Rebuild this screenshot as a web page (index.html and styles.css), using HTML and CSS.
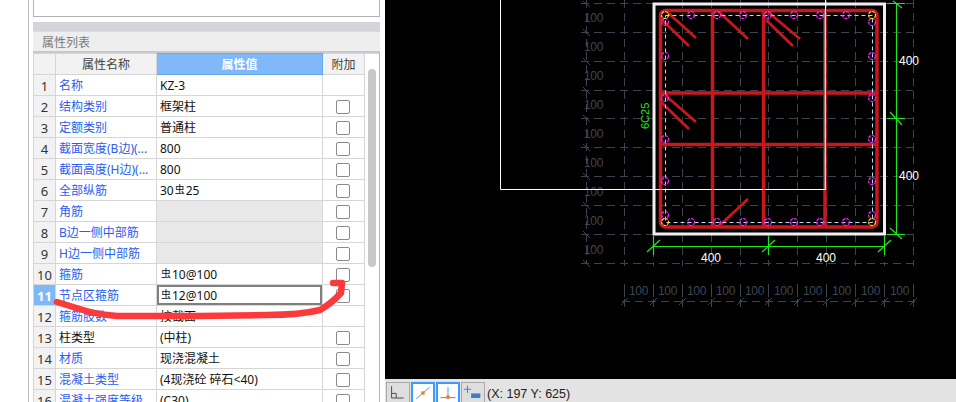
FILE: index.html
```html
<!DOCTYPE html>
<html lang="zh-CN">
<head>
  <meta charset="UTF-8" />
  <title>属性列表</title>
  <link rel="stylesheet" href="styles.css">
</head>
<body>

  <div class="side">
    <div class="side-inner">
      <div class="top-box"></div>
      <div class="strip"></div>
      <div class="list-title">属性列表</div>
      <div class="table-wrap">
        <table class="props">
          <colgroup>
            <col class="c-num"><col class="c-name"><col class="c-value"><col class="c-add">
          </colgroup>
          <tr class="head">
            <th></th><th>属性名称</th><th class="on">属性值</th><th>附加</th>
          </tr>
          <tr><td class="num">1</td><td class="name">名称</td><td>KZ-3</td><td class="add"></td></tr>
          <tr><td class="num">2</td><td class="name">结构类别</td><td>框架柱</td><td class="add"><span class="check"></span></td></tr>
          <tr><td class="num">3</td><td class="name">定额类别</td><td>普通柱</td><td class="add"><span class="check"></span></td></tr>
          <tr><td class="num">4</td><td class="name">截面宽度(B边)(...</td><td>800</td><td class="add"><span class="check"></span></td></tr>
          <tr><td class="num">5</td><td class="name">截面高度(H边)(...</td><td>800</td><td class="add"><span class="check"></span></td></tr>
          <tr><td class="num">6</td><td class="name">全部纵筋</td><td>30<span class="steel">虫</span>25</td><td class="add"><span class="check"></span></td></tr>
          <tr><td class="num">7</td><td class="name">角筋</td><td class="empty"></td><td class="add"><span class="check"></span></td></tr>
          <tr><td class="num">8</td><td class="name">B边一侧中部筋</td><td class="empty"></td><td class="add"><span class="check"></span></td></tr>
          <tr><td class="num">9</td><td class="name">H边一侧中部筋</td><td class="empty"></td><td class="add"><span class="check"></span></td></tr>
          <tr><td class="num">10</td><td class="name">箍筋</td><td><span class="steel">虫</span>10@100</td><td class="add"><span class="check"></span></td></tr>
          <tr><td class="num sel">11</td><td class="name">节点区箍筋</td><td class="editing"><span class="steel">虫</span>12@100</td><td class="add"><span class="check"></span></td></tr>
          <tr><td class="num">12</td><td class="name">箍筋肢数</td><td>按截面</td><td class="add"></td></tr>
          <tr><td class="num">13</td><td>柱类型</td><td>(中柱)</td><td class="add"><span class="check"></span></td></tr>
          <tr><td class="num">14</td><td class="name">材质</td><td>现浇混凝土</td><td class="add"><span class="check"></span></td></tr>
          <tr><td class="num">15</td><td class="name">混凝土类型</td><td>(4现浇砼 碎石&lt;40)</td><td class="add"><span class="check"></span></td></tr>
          <tr><td class="num">16</td><td class="name">混凝土强度等级</td><td>(C30)</td><td class="add"><span class="check"></span></td></tr>
        </table>
        <div class="scroll"><div class="thumb"></div></div>
      </div>
    </div>
    <!-- red marker stroke drawn over the table -->
    <svg class="marker" viewBox="0 0 385 402">
      <path d="M333 283 L342 283 L341 293 Q332 303 320 310 Q300 315 267 315 L200 316 L117 316 Q95 314 83 310 L57 302" />
    </svg>
  </div>

  <div class="work">
    <svg class="cad" viewBox="385 0 571 379">
      <!-- grid -->
      <path class="grid" d="M581 3.5H913M581 32.5H913M581 61.5H913M581 90.5H913M581 118.5H913M581 147.5H913M581 176.5H913M581 205.5H913M581 234.5H913M581 263.5H913M622 301.5H915" />
      <path class="grid" d="M586.5 0V263M624.5 0V266M653.5 236V266M682.5 0V266M711.5 0V266M740.5 0V266M768.5 0V266M797.5 0V266M826.5 0V266M855.5 0V266M884.5 236V266M913.5 0V266" />
      <path class="tick" d="M624.5 284V297M653.5 284V297M682.5 284V297M711.5 284V297M740.5 284V297M768.5 284V297M797.5 284V297M826.5 284V297M855.5 284V297M884.5 284V297M913.5 284V297" />
      <path class="tick" d="M624.5 299V307M653.5 299V307M682.5 299V307M711.5 299V307M740.5 299V307M768.5 299V307M797.5 299V307M826.5 299V307M855.5 299V307M884.5 299V307M913.5 299V307" />
      <path class="tick" d="M621 305L628 298M650 305L657 298M679 305L686 298M708 305L715 298M737 305L744 298M765 305L772 298M794 305L801 298M823 305L830 298M852 305L859 298M881 305L888 298M910 305L917 298" />
      <path class="tick" d="M583 1L590 7M583 29L590 36M583 58L590 65M583 87L590 94M583 115L590 122M583 144L590 151M583 173L590 180M583 202L590 209M583 231L590 238M583 260L590 267" />
      <g class="grid-text">
        <text x="584" y="22">100</text><text x="584" y="51">100</text><text x="584" y="80">100</text>
        <text x="584" y="109">100</text><text x="584" y="138">100</text><text x="584" y="167">100</text>
        <text x="584" y="196">100</text><text x="584" y="225">100</text><text x="584" y="254">100</text>
        <text x="629" y="295">100</text><text x="658" y="295">100</text><text x="687" y="295">100</text>
        <text x="716" y="295">100</text><text x="745" y="295">100</text><text x="774" y="295">100</text>
        <text x="803" y="295">100</text><text x="832" y="295">100</text><text x="861" y="295">100</text>
        <text x="890" y="295">100</text>
      </g>

      <!-- column outline -->
      <rect class="outline" x="654" y="4" width="230.5" height="230" />

      <!-- rebar -->
      <rect class="bar" x="660.5" y="10.5" width="216.5" height="216.5" rx="5" />
      <path class="bar" d="M712.5 10V227M763.5 10V227M825 10V227M660 93H877M660 144.5H877" />
      <path class="bar-thin" d="M665 10L696 38M662 20L689 46M717 10L748 39M768 12L800 39M766 20L793 46M665 95L696 122M661 102L689 129M718 227L748 199" />

      <rect class="inner" x="665.5" y="15.5" width="207" height="207" />

      <g class="pin">
        <circle cx="691" cy="15" r="3.5"/><circle cx="717" cy="15" r="3.5"/><circle cx="743" cy="15" r="3.5"/>
        <circle cx="768" cy="15" r="3.5"/><circle cx="794" cy="15" r="3.5"/><circle cx="820" cy="15" r="3.5"/>
        <circle cx="846" cy="15" r="3.5"/>
        <circle cx="691" cy="222" r="3.5"/><circle cx="717" cy="222" r="3.5"/><circle cx="743" cy="222" r="3.5"/>
        <circle cx="768" cy="222" r="3.5"/><circle cx="794" cy="222" r="3.5"/><circle cx="820" cy="222" r="3.5"/>
        <circle cx="846" cy="222" r="3.5"/>
        <circle cx="665" cy="22" r="3.5"/><circle cx="665" cy="56" r="3.5"/><circle cx="665" cy="98" r="3.5"/>
        <circle cx="665" cy="139" r="3.5"/><circle cx="665" cy="181" r="3.5"/><circle cx="665" cy="215" r="3.5"/>
        <circle cx="872" cy="22" r="3.5"/><circle cx="872" cy="56" r="3.5"/><circle cx="872" cy="98" r="3.5"/>
        <circle cx="872" cy="139" r="3.5"/><circle cx="872" cy="181" r="3.5"/><circle cx="872" cy="215" r="3.5"/>
      </g>
      <g class="pin corner">
        <circle cx="665" cy="15" r="3.5"/><circle cx="872" cy="15" r="3.5"/>
        <circle cx="665" cy="222" r="3.5"/><circle cx="872" cy="222" r="3.5"/>
      </g>

      <!-- selection frame -->
      <path class="frame" d="M500.5 0V189.5H825.5V0" />
      <path class="frame-over" d="M825 10V189M660 189.5H662M712 189.5H714M763 189.5H765" />

      <!-- dimensions -->
      <path class="dim" d="M896.5 3V234M887 3.5H905M887 118.5H905M887 234.5H905M653.5 246.5H884.5M653.5 236V255M768.5 236V255M884.5 236V255" />
      <path class="dim" d="M893 1L902 8M890 112L902 125M890 228L902 239M647 252L660 240M762 252L775 240M878 252L891 240" />
      <text class="dim-text" x="701" y="262">400</text>
      <text class="dim-text" x="816" y="262">400</text>
      <text class="dim-text" x="899" y="65">400</text>
      <text class="dim-text" x="899" y="180">400</text>
      <text class="note" transform="translate(649 129) rotate(-90)">6C25</text>
    </svg>

    <div class="status">
      <div class="tool">
        <svg viewBox="0 0 24 20"><path class="ic-dark" d="M5 3V16H18M5 11H10V16" /></svg>
      </div>
      <div class="tool active">
        <svg viewBox="0 0 24 20"><path class="ic-blue" d="M4 17L20 3" /><rect class="ic-orange" x="10" y="8" width="4" height="4" /></svg>
      </div>
      <div class="tool active">
        <svg viewBox="0 0 24 20"><path class="ic-blue" d="M12 3V15M3 15.5H21" /><rect class="ic-orange" x="10" y="13" width="4" height="4" /></svg>
      </div>
      <div class="tool">
        <svg viewBox="0 0 24 20"><path class="ic-blue" d="M2 6.5H10M6 2.5V10.5" /><rect class="ic-fill" x="10" y="11" width="10" height="5" /></svg>
      </div>
      <span class="coords">(X: 197 Y: 625)</span>
    </div>
  </div>

</body>
</html>
```

FILE: styles.css
```css
html, body {
  margin: 0;
  height: 100%;
}

body {
  display: flex;
  width: 956px;
  height: 402px;
  overflow: hidden;
  background: white;
  font-family: "Noto Sans", "Noto Sans CJK SC", sans-serif;
  font-size: 12px;
  color: #111;
}

.side {
  position: relative;
  flex: 0 0 385px;
  height: 402px;
  padding-left: 28px;
  box-sizing: border-box;
}

.side-inner {
  height: 402px;
  width: 347px;
  border-left: 1px solid #bdbdbd;
  padding-left: 4px;
}

.top-box {
  height: 16px;
  background: white;
  border: 1px solid #b4b4b4;
  border-top: none;
}

.strip {
  margin-top: 5px;
  height: 9px;
  background: #d3d5d9;
}

.list-title {
  height: 22px;
  line-height: 21px;
  background: #eeeeee;
  border-bottom: 2px solid #c9c9c9;
  border-top: 1px solid #dcdcdc;
  box-sizing: border-box;
  padding-left: 9px;
  font-size: 12px;
  color: #7b7b7b;
}

.table-wrap {
  display: flex;
  height: 349px;
  overflow: hidden;
  border-right: 1px solid #b4b4b4;
}

.props {
  border-collapse: collapse;
  table-layout: fixed;
  width: 331px;
  flex: none;
  align-self: flex-start;
}

.c-num { width: 22px; }
.c-name { width: 101px; }
.c-value { width: 166px; }
.c-add { width: 42px; }

.props tr {
  height: 21px;
}

.props th, .props td {
  border: 1px solid #d6d6d6;
  padding: 1px 3px 0;
  box-sizing: border-box;
  height: 21px;
  line-height: 18px;
  white-space: nowrap;
  overflow: hidden;
  font-weight: normal;
}

.props th {
  background: #f2f2f2;
  text-align: center;
  color: #444;
}

.props th.on {
  background: #7fb9fa;
  border-color: #62a8f2;
  color: white;
  font-weight: bold;
}

.props td.num {
  background: #f2f2f2;
  text-align: center;
  font-size: 13px;
  color: #333;
}

.props td.num.sel {
  background: #7db8f7;
  color: white;
  font-weight: bold;
}

.name {
  color: #2a5cf0;
}

.empty {
  background: #e9e9e9;
}

.props td.editing {
  box-shadow: inset 0 0 0 2px #808080;
}

.props td.add {
  padding: 0 4px 0 2px;
  text-align: center;
}

.check {
  display: inline-block;
  width: 12px;
  height: 12px;
  border: 1px solid #8a8a8a;
  border-radius: 2px;
  vertical-align: middle;
  background: white;
}

.steel {
  font-size: 10px;
  position: relative;
  top: -2px;
  margin: 0 1px;
}

.scroll {
  flex: 1;
  padding-top: 15px;
  background: white;
  border-top: 1px solid #d6d6d6;
  display: flex;
  justify-content: center;
}

.thumb {
  width: 8px;
  height: 198px;
  border-radius: 4px;
  background: #c8c8c8;
}

.marker {
  position: absolute;
  left: 0;
  top: 0;
  width: 385px;
  height: 402px;
  pointer-events: none;
}

.marker path {
  fill: none;
  stroke: #fb3a3c;
  stroke-width: 6.5;
  stroke-linecap: round;
  stroke-linejoin: round;
}

.work {
  flex: 1;
  display: flex;
  flex-direction: column;
  min-width: 0;
}

.cad {
  display: block;
  width: 571px;
  height: 379px;
  background: black;
}

.grid {
  fill: none;
  stroke: #3b4250;
  stroke-dasharray: 8 5;
}

.tick {
  fill: none;
  stroke: #3b4250;
}

.grid-text {
  font-family: "Liberation Sans", sans-serif;
  font-size: 12px;
  letter-spacing: -0.3px;
  fill: #3f4754;
}

.outline {
  fill: none;
  stroke: #f0f0f0;
  stroke-width: 3;
}

.bar {
  fill: none;
  stroke: #c8181f;
  stroke-width: 3.5;
}

.bar-thin {
  fill: none;
  stroke: #c8181f;
  stroke-width: 2.8;
}

.inner {
  fill: none;
  stroke: #bcd8f0;
  stroke-dasharray: 4 3;
}

.pin circle {
  fill: none;
  stroke: #ff22ff;
  stroke-width: 1.2;
  stroke-dasharray: 3 1;
}

.pin.corner circle {
  stroke: #f7d81c;
}

.frame {
  fill: none;
  stroke: white;
}

.frame-over {
  fill: none;
  stroke: #6fc4c4;
}

.dim {
  fill: none;
  stroke: #1fe61f;
  stroke-width: 1.2;
}

.dim-text {
  font-family: "Liberation Sans", sans-serif;
  font-size: 12px;
  fill: white;
}

.note {
  font-family: "Liberation Sans", sans-serif;
  font-size: 11px;
  fill: #1fe61f;
}

.status {
  flex: 1;
  display: flex;
  align-items: flex-end;
  gap: 1px;
  padding-left: 1px;
  background: #e3e3e3;
}

.tool {
  box-sizing: border-box;
  width: 24px;
  height: 20px;
  border: 1px solid #a9a9a9;
  border-bottom: none;
  background: #dedede;
}

.tool.active {
  border: 2px solid #3b9bf5;
  border-bottom: none;
  background: white;
}

.tool svg {
  display: block;
  width: 100%;
  height: 100%;
}

.ic-dark, .ic-blue {
  fill: none;
  stroke-width: 1;
}

.ic-dark { stroke: #444; }
.ic-blue { stroke: #3b7fc9; }
.ic-orange { fill: #e8822a; }
.ic-fill { fill: #3b7fc9; }

.coords {
  font-family: "Liberation Sans", sans-serif;
  font-size: 12.5px;
  line-height: 15px;
  color: #222;
  margin-left: 1px;
}
```
